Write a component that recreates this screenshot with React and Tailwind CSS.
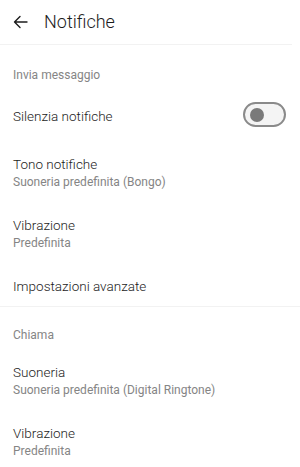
export default function App() {
  const font = { fontFamily: 'Roboto, "Noto Sans", sans-serif' };

  return (
    <div className="w-[300px] h-[467px] bg-white overflow-hidden font-light" style={font}>
      {/* Header */}
      <div className="h-[44px] flex items-center pl-[13px]">
        <svg width="15" height="14" viewBox="0 0 15 14" fill="none" className="text-[#1c1c1c]">
          <path d="M14 7H1.5M7 1.5 1.5 7 7 12.5" stroke="currentColor" strokeWidth="1.4" strokeLinecap="round" strokeLinejoin="round" />
        </svg>
        <h1 className="ml-[16px] text-[18px] leading-6 text-[#1c1c1c]">Notifiche</h1>
      </div>
      <div className="h-px w-[292px] bg-[#f2f2f2]" />

      {/* Invia messaggio */}
      <div className="px-[13px] pt-[22px] pb-[8px] text-[12px] leading-4 font-normal text-[#858585]">Invia messaggio</div>

      <div className="h-[50px] flex items-center justify-between pl-[13px] pr-[14px]">
        <span className="text-[13.5px] leading-5 text-[#1c1c1c]">Silenzia notifiche</span>
        <div className="w-[43px] h-[25px] -mt-[3px] rounded-full border-2 border-[#8a8a8a] bg-[#f4f4f4] flex items-center pl-[5px]">
          <div className="w-[14px] h-[14px] rounded-full bg-[#7a7a7a]" />
        </div>
      </div>

      <Row title="Tono notifiche" sub="Suoneria predefinita (Bongo)" />
      <Row title="Vibrazione" sub="Predefinita" />
      <div className="pl-[13px] pt-[13px] pb-[10px] text-[13.5px] leading-5 text-[#1c1c1c]">Impostazioni avanzate</div>

      <div className="h-px bg-[#f2f2f2]" />

      {/* Chiama */}
      <div className="px-[13px] pt-[20px] pb-[6px] text-[12px] leading-4 font-normal text-[#858585]">Chiama</div>
      <Row title="Suoneria" sub="Suoneria predefinita (Digital Ringtone)" />
      <Row title="Vibrazione" sub="Predefinita" />
    </div>
  );
}

function Row({ title, sub }) {
  return (
    <div className="pl-[13px] pr-[14px] pt-[13px] pb-[12px]">
      <div className="text-[13.5px] leading-5 text-[#1c1c1c]">{title}</div>
      <div className="text-[12px] leading-4 font-normal text-[#858585]">{sub}</div>
    </div>
  );
}
